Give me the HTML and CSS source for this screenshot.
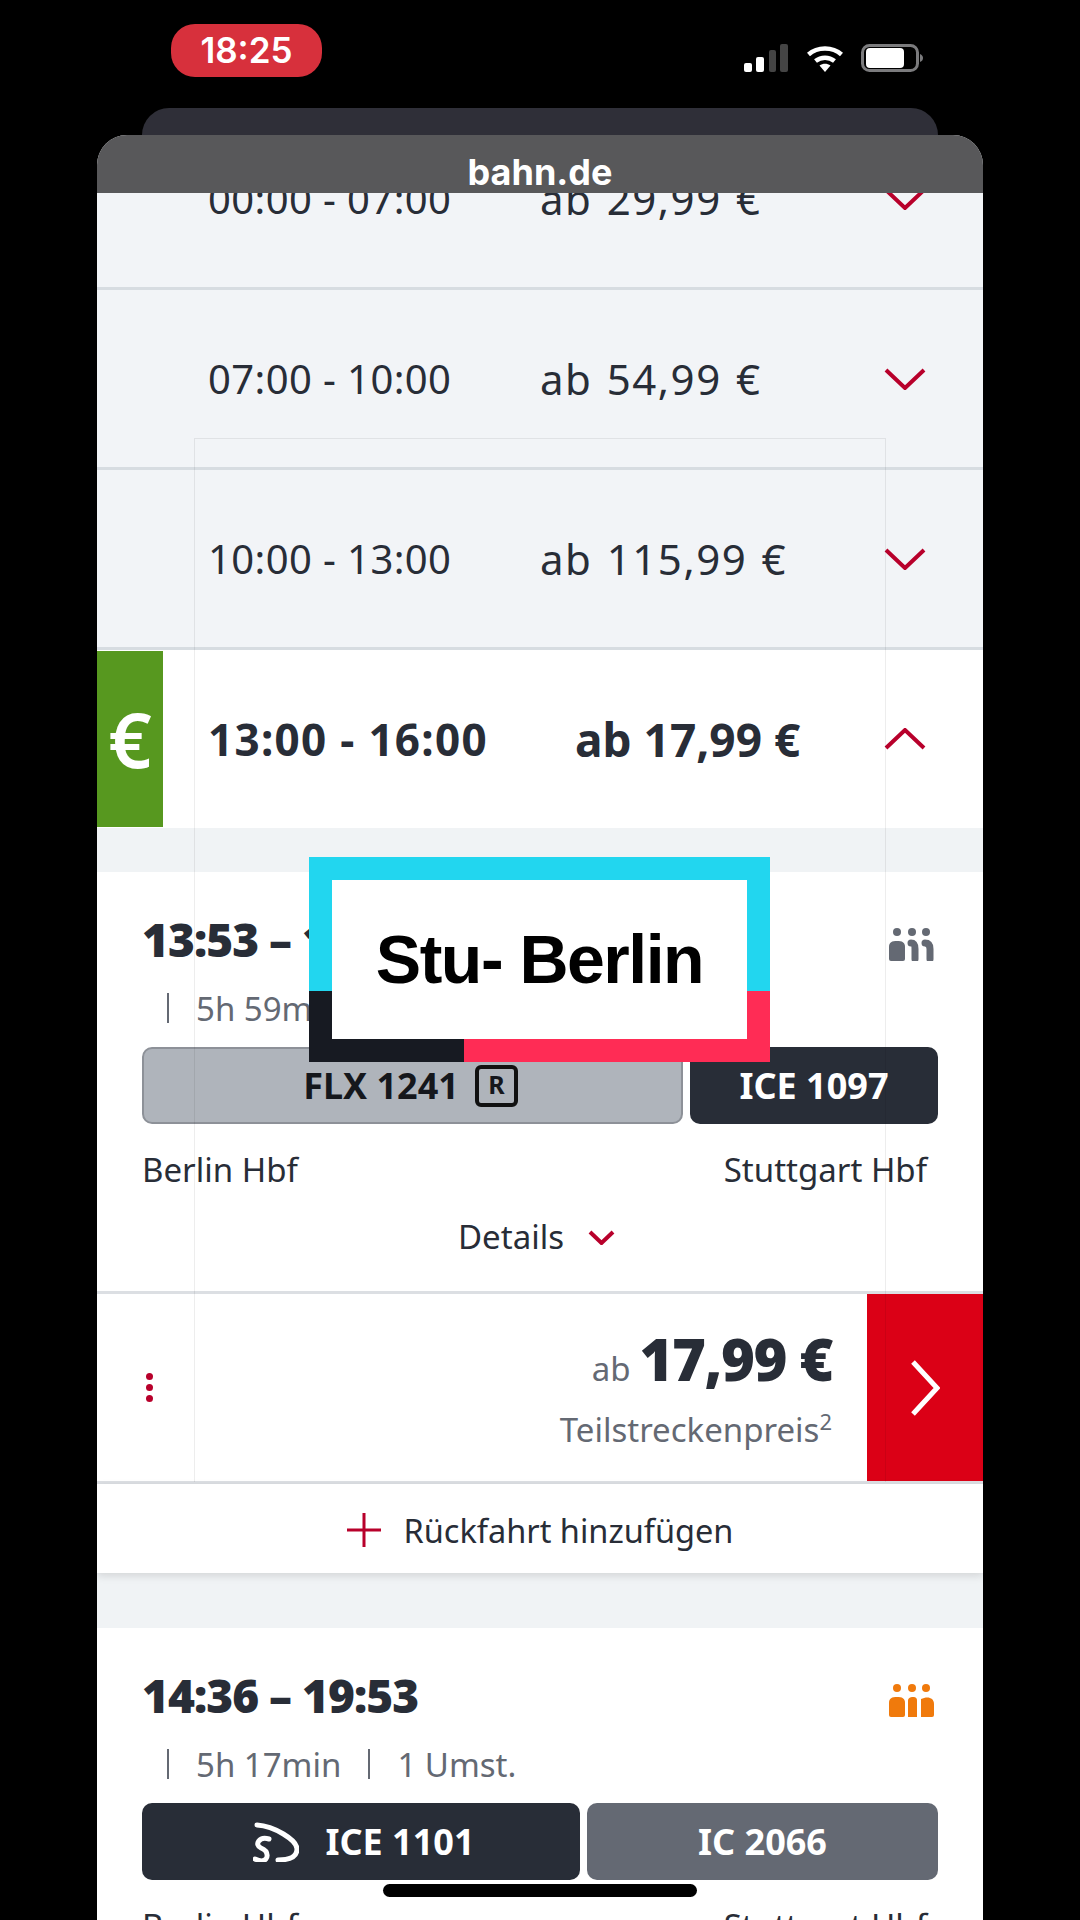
FILE: index.html
```html
<!DOCTYPE html>
<html lang="de">
<head>
<meta charset="utf-8">
<title>bahn.de</title>
<link rel="stylesheet" href="styles.css">
</head>
<body>
<div class="phone">
  <header class="status">
    <div class="clock">18:25</div>
    <div class="status-icons">
      <svg class="signal" width="45" height="28" viewBox="0 0 45 28"><rect class="on" x="0" y="19" width="8" height="9" rx="2"/><rect class="on" x="12" y="13" width="8" height="15" rx="2"/><rect class="off" x="25" y="6" width="7" height="22" rx="2"/><rect class="off" x="36" y="0" width="8" height="28" rx="2"/></svg>
      <svg class="wifi" width="38" height="28" viewBox="0 0 38 28"><path class="wifi-arc" d="M2.500 10.500C11.500 2.500 26.500 2.500 35.500 10.500"/><path class="wifi-arc" d="M9.500 17C15 12.500 23 12.500 28.500 17"/><path class="wifi-dot" d="M13.500 21.500C17 19 21 19 24.500 21.500L19 28Z"/></svg>
      <svg class="battery" width="62" height="28" viewBox="0 0 62 28"><rect class="batt-shell" x="1.500" y="1.500" width="55" height="25" rx="7"/><rect class="batt-fill" x="5" y="4" width="38" height="20" rx="4"/><path class="batt-nub" d="M59 10C61 11 62 12 62 14C62 16 61 17 59 18Z"/></svg>
    </div>
  </header>

  <div class="back-sheet"></div>

  <main class="sheet">
    <div class="address">bahn.de</div>
    <div class="viewport">
      <div class="slots">
        <div class="slot slot-cut"><span class="slot-time">00:00 - 07:00</span><span class="slot-price">ab 29,99 €</span>
          <svg class="chev" viewBox="0 0 42 22"><path d="M2 2L21 20L40 2"/></svg></div>
        <div class="slot"><span class="slot-time">07:00 - 10:00</span><span class="slot-price">ab 54,99 €</span>
          <svg class="chev" viewBox="0 0 42 22"><path d="M2 2L21 20L40 2"/></svg></div>
        <div class="slot"><span class="slot-time">10:00 - 13:00</span><span class="slot-price">ab 115,99 €</span>
          <svg class="chev" viewBox="0 0 42 22"><path d="M2 2L21 20L40 2"/></svg></div>
        <div class="slot slot-open">
          <div class="best">€</div>
          <span class="open-time">13:00 - 16:00</span><span class="open-price">ab 17,99 €</span>
          <svg class="chev" viewBox="0 0 42 22"><path d="M2 20L21 2L40 20"/></svg>
        </div>
      </div>

      <section class="conn conn-first">
        <div class="conn-head">
          <div class="conn-time">13:53 – 19:52</div>
          <svg class="occ occ-low" viewBox="0 0 45 33"><circle cx="8" cy="4" r="4"/><circle cx="23" cy="4" r="4"/><circle cx="37" cy="4" r="4"/><path d="M0 19C0 14 3 13 8 13C13 13 16 14 16 19V31Q16 33 14 33H2Q0 33 0 31Z"/><path class="occ-line" d="M22 15C26 15 26 18 26 21V31"/><path class="occ-line" d="M36 15C40 15 41 18 41 21V31"/></svg>
        </div>
        <div class="conn-sub"><span class="pipe"></span><span>5h 59min</span><span class="pipe"></span><span>1 Umst.</span></div>
        <div class="trains">
          <div class="train train-light train-wide"><span>FLX 1241</span><span class="res">R</span></div>
          <div class="train train-dark train-narrow"><span>ICE 1097</span></div>
        </div>
        <div class="stations"><span>Berlin Hbf</span><span>Stuttgart Hbf</span></div>
        <div class="details"><span>Details</span><svg class="chev-small" viewBox="0 0 27 15"><path d="M2 2L13.500 13L25 2"/></svg></div>
      </section>

      <section class="offer">
        <div class="dots"><i></i><i></i><i></i></div>
        <div class="offer-price">
          <div class="price-line"><span class="price-ab">ab</span><span class="price-val">17,99 €</span></div>
          <div class="price-note">Teilstreckenpreis<sup>2</sup></div>
        </div>
        <div class="go"><svg width="30" height="56" viewBox="0 0 30 56"><path d="M3 2L27 28L3 54"/></svg></div>
      </section>

      <div class="return">
        <svg class="plus" width="34" height="34" viewBox="0 0 34 34"><path d="M17 0V34M0 17H34"/></svg>
        <span>Rückfahrt hinzufügen</span>
      </div>

      <section class="conn conn-second">
        <div class="conn-head">
          <div class="conn-time">14:36 – 19:53</div>
          <svg class="occ occ-mid" viewBox="0 0 45 33"><circle cx="8" cy="4" r="4"/><circle cx="23" cy="4" r="4"/><circle cx="37" cy="4" r="4"/><path d="M0 19C0 14 3 13 8 13C13 13 16 14 16 19V31Q16 33 14 33H2Q0 33 0 31Z"/><path d="M19 17C19 14 21 13 24 13C27 13 28 14 28 17V33H19Z"/><path d="M32 15C38 12 45 13 45 20V31Q45 33 43 33H32Z"/></svg>
        </div>
        <div class="conn-sub"><span class="pipe"></span><span>5h 17min</span><span class="pipe"></span><span>1 Umst.</span></div>
        <div class="trains">
          <div class="train train-dark train-ice">
            <svg class="sprinter" width="46" height="40" viewBox="14 20 46 40"><path d="M18 23C35 24 58 38 58 47C58 56 48 58 39 58"/><path d="M30 37C20 34 15 43 22 46C30 49 30 58 23 59C20 59 18 58 16 57"/></svg>
            <span>ICE 1101</span>
          </div>
          <div class="train train-grey train-ic"><span>IC 2066</span></div>
        </div>
        <div class="stations"><span>Berlin Hbf</span><span>Stuttgart Hbf</span></div>
      </section>
    </div>
  </main>

  <div class="guide"></div>
  <div class="sticker"><div class="sticker-inner">Stu- Berlin</div></div>
  <div class="home-bar"></div>
</div>
</body>
</html>
```

FILE: styles.css
```css
* { box-sizing: border-box; }

html, body {
  margin: 0;
  padding: 0;
  background: #000;
}

.phone {
  position: relative;
  width: 1080px;
  height: 1920px;
  overflow: hidden;
  background: #000;
  font-family: "Noto Sans", sans-serif;
  color: #282d37;
}

/* status bar */
.status {
  height: 108px;
  display: flex;
  justify-content: space-between;
  padding: 24px 157px 0 171px;
}

.clock {
  width: 151px;
  height: 53px;
  border-radius: 24px;
  background: #d7303c;
  color: #fff;
  font-family: Inter, sans-serif;
  font-weight: 600;
  font-size: 35px;
  line-height: 53px;
  text-align: center;
}

.status-icons {
  display: flex;
  gap: 17px;
  padding-top: 20px;
  height: 48px;
}

.signal .on { fill: #fff; }
.signal .off { fill: #444; }
.wifi-arc { fill: none; stroke: #fff; stroke-width: 4.500; }
.wifi-dot { fill: #fff; }
.batt-shell { fill: none; stroke: #7b7b7d; stroke-width: 3; }
.batt-fill { fill: #fff; }
.batt-nub { fill: #7b7b7d; }

/* browser sheets */
.back-sheet {
  height: 27px;
  margin: 0 142px;
  background: #2f2f38;
  border-radius: 30px 30px 0 0;
}

.sheet {
  margin: 0 97px;
  height: 1785px;
  display: flex;
  flex-direction: column;
  overflow: hidden;
  border-radius: 30px 30px 0 0;
  background: #f0f3f5;
}

.address {
  position: relative;
  flex: none;
  height: 58px;
  background: #58585a;
  color: #fff;
  font-family: Inter, sans-serif;
  font-weight: 700;
  font-size: 36px;
  line-height: 74px;
  text-align: center;
}

.viewport {
  flex: 1;
  overflow: hidden;
}

/* time slots */
.slots {
  margin-top: -83px;
}

.slot {
  position: relative;
  height: 180px;
  display: grid;
  grid-template-columns: 332px 1fr auto;
  align-items: center;
  padding: 0 57px 0 111px;
  background: #f2f4f7;
  border-bottom: 3px solid #d7dce1;
  font-size: 40px;
  color: #282d37;
}

.slot-time { letter-spacing: 0.400px; }
.slot-price { font-size: 42px; letter-spacing: 1.500px; word-spacing: 2px; }

.slot-open {
  height: 178px;
  grid-template-columns: 367px 1fr auto;
  background: #fff;
  border-bottom: 0;
  font-weight: 700;
  font-size: 44px;
}

.open-time { letter-spacing: 1.300px; }
.open-price { font-size: 46px; }

.best {
  position: absolute;
  left: 0;
  top: 1px;
  width: 66px;
  height: 176px;
  background: #57981f;
  color: #fff;
  font-size: 76px;
  font-weight: 600;
  line-height: 176px;
  text-align: center;
}

.chev {
  display: block;
  width: 42px;
  height: 22px;
  fill: none;
  stroke: #b8002b;
  stroke-width: 4;
}

/* connection card */
.conn {
  padding: 0 45px;
  background: #fff;
}

.conn-first {
  margin-top: 44px;
  height: 422px;
  border-bottom: 3px solid #dcdfe3;
}

.conn-second {
  margin-top: 55px;
  height: 300px;
}

.conn-head {
  height: 117px;
  padding-top: 16px;
  display: flex;
  justify-content: space-between;
  align-items: center;
}

.conn-time {
  font-weight: 900;
  font-size: 46px;
  letter-spacing: -1px;
}

.occ {
  width: 45px;
  height: 33px;
  flex: none;
  margin: 12px 4px 0 0;
}

.occ-low { fill: #646973; }
.occ-mid { fill: #f07a0c; }
.occ-line { fill: none; stroke: #646973; stroke-width: 7; stroke-linecap: round; }

.conn-sub {
  height: 38px;
  display: flex;
  align-items: center;
  gap: 27px;
  padding-left: 25px;
  color: #646973;
  font-size: 33px;
}

.pipe {
  width: 2px;
  height: 30px;
  background: #646973;
}

.trains {
  display: flex;
  gap: 7px;
  margin-top: 20px;
  height: 77px;
}

.train {
  display: flex;
  align-items: center;
  justify-content: center;
  border-radius: 10px;
  font-weight: 700;
  font-size: 36px;
  gap: 16px;
}

.train-wide { width: 541px; }
.train-narrow { width: 248px; }
.train-ice { width: 438px; gap: 26px; padding-left: 6px; }
.train-ic { width: 351px; }

.train-light {
  background: #afb4bb;
  border: 2px solid #8d9198;
  color: #15171c;
  padding-right: 4px;
}

.train-dark {
  background: #282d37;
  color: #fff;
}

.train-grey {
  background: #646973;
  color: #fff;
}

.res {
  width: 43px;
  height: 42px;
  border: 4px solid #111;
  border-radius: 6px;
  font-size: 25px;
  line-height: 31px;
  text-align: center;
}

.sprinter path {
  fill: none;
  stroke: #fff;
  stroke-width: 5;
  stroke-linecap: round;
}

.stations {
  display: flex;
  justify-content: space-between;
  margin-top: 24px;
  padding-right: 11px;
  font-size: 33px;
  line-height: 44px;
}

.details {
  display: flex;
  justify-content: center;
  align-items: center;
  gap: 24px;
  margin-top: 23px;
  font-size: 33px;
  line-height: 44px;
  padding-right: 7px;
}

.chev-small {
  width: 27px;
  height: 15px;
  fill: none;
  stroke: #b8002b;
  stroke-width: 4;
}

/* offer row */
.offer {
  height: 190px;
  display: flex;
  align-items: center;
  background: #fff;
  border-bottom: 3px solid #dcdfe3;
}

.dots {
  display: flex;
  flex-direction: column;
  gap: 4px;
  margin-left: 49px;
}

.dots i {
  width: 7px;
  height: 7px;
  border-radius: 50%;
  background: #b8002b;
}

.offer-price {
  margin-left: auto;
  margin-right: 35px;
  text-align: right;
}

.price-line {
  display: flex;
  justify-content: flex-end;
  align-items: baseline;
  gap: 9px;
  line-height: 70px;
}

.price-ab {
  font-size: 33px;
  color: #646973;
}

.price-val {
  font-size: 58px;
  font-weight: 900;
  letter-spacing: -1.500px;
}

.price-note {
  margin-top: 4px;
  font-size: 33px;
  line-height: 44px;
  color: #646973;
}

.price-note sup {
  font-size: 22px;
  line-height: 0;
}

.go {
  align-self: stretch;
  width: 116px;
  background: #db0016;
  display: flex;
  align-items: center;
  justify-content: center;
}

.go svg { fill: none; stroke: #fff; stroke-width: 5; }

/* return */
.return {
  position: relative;
  height: 89px;
  padding-top: 3px;
  display: flex;
  align-items: center;
  justify-content: center;
  gap: 23px;
  background: #fff;
  font-size: 32.500px;
  box-shadow: 0 3px 8px rgba(0, 0, 0, 0.12);
}

.plus { stroke: #b8002b; stroke-width: 3; fill: none; }

/* overlays */
.guide {
  position: absolute;
  left: 194px;
  top: 438px;
  width: 692px;
  height: 1044px;
  border: 1px solid rgba(0, 0, 0, 0.07);
  border-bottom: 0;
  pointer-events: none;
}

.sticker {
  position: absolute;
  left: 309px;
  top: 857px;
  width: 461px;
  height: 205px;
  padding: 23px;
  background:
    linear-gradient(#22d6ef, #22d6ef) left top / 100% 134px no-repeat,
    linear-gradient(#171a22, #171a22) left bottom / 155px 71px no-repeat,
    #ff2c55;
}

.sticker-inner {
  height: 159px;
  background: #fff;
  color: #000;
  font-family: "Liberation Sans", Arial, sans-serif;
  font-weight: 700;
  font-size: 68px;
  letter-spacing: -1.500px;
  line-height: 159px;
  text-align: center;
}

.home-bar {
  position: absolute;
  left: 383px;
  top: 1884px;
  width: 314px;
  height: 13px;
  border-radius: 7px;
  background: #000;
}
```
